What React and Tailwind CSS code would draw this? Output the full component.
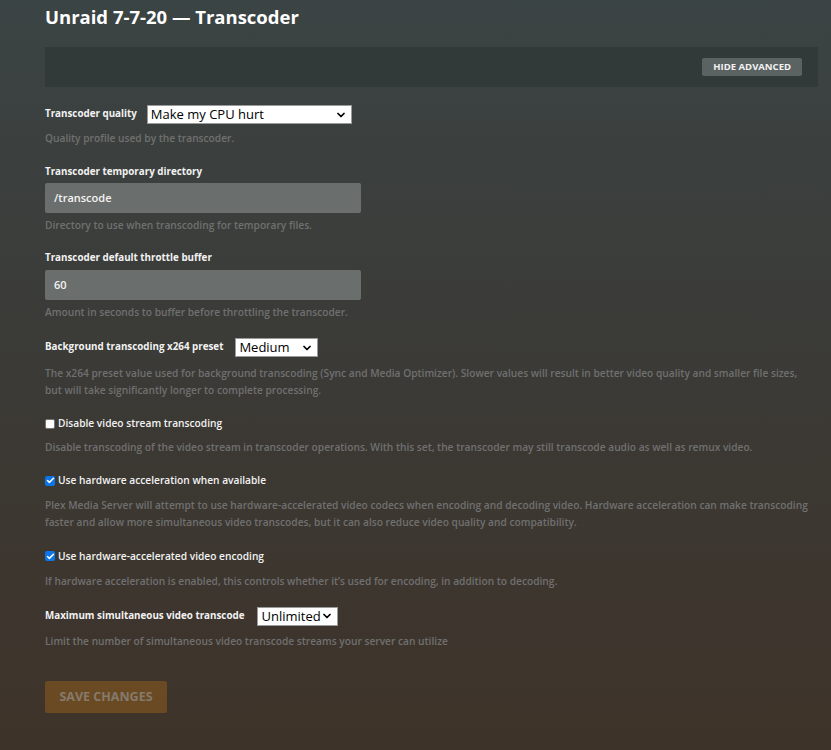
import { ChevronDown, Check } from "lucide-react";

const font = { fontFamily: "'Open Sans', 'Liberation Sans', sans-serif" };

// Native-looking select box with a chevron on the right
const Select = ({ value, className }) => (
  <div
    className={`flex h-[19px] items-center justify-between border border-[#9a9a9a] bg-white pl-[3px] pr-[4px] text-[13px] leading-none text-black ${className}`}
  >
    <span>{value}</span>
    <ChevronDown size={12} strokeWidth={3.5} className="text-black" />
  </div>
);

const Hint = ({ children, className = "" }) => (
  <p className={`text-[10.2px] font-semibold leading-[17px] text-[#707070] ${className}`}>
    {children}
  </p>
);

const Label = ({ children }) => (
  <span className="text-[9.8px] font-bold text-[#f2f2f2]">{children}</span>
);

const Checkbox = ({ checked, label }) => (
  <label className="flex items-center gap-[3px] text-[10.2px] font-semibold text-[#f2f2f2]">
    {checked ? (
      <span className="flex h-[10px] w-[10px] items-center justify-center rounded-[2px] bg-[#0b75ea]">
        <Check size={9} strokeWidth={4} className="text-white" />
      </span>
    ) : (
      <span className="h-[10px] w-[10px] rounded-[2px] border border-[#767676] bg-white" />
    )}
    {label}
  </label>
);

const TextInput = ({ value }) => (
  <div className="flex h-[30px] w-[316px] items-center rounded-[2px] bg-[#6a6e6d] px-[9px] text-[11px] font-semibold text-[#f4f4f4]">
    {value}
  </div>
);

export default function App() {
  return (
    <div
      style={font}
      className="min-h-screen bg-linear-to-b from-[#3b4444] via-[#3b3a36] to-[#3e3329] pb-[37px] pl-[45px] pr-[13px]"
    >
      {/* Page title */}
      <h1 className="pt-[3px] text-[18.5px] font-bold leading-[28px] text-white">
        Unraid 7-7-20 — Transcoder
      </h1>

      {/* Toolbar */}
      <div className="mt-[16px] flex h-[40px] items-center justify-end bg-[#323a39] pr-[16px]">
        <button className="h-[18px] rounded-[2px] bg-[#5b6262] px-[11px] text-[9.5px] font-bold uppercase leading-none text-[#f2f2f2]">
          Hide Advanced
        </button>
      </div>

      {/* Transcoder quality */}
      <div className="mt-[18px] flex items-center gap-[10px]">
        <Label>Transcoder quality</Label>
        <Select value="Make my CPU hurt" className="w-[205px]" />
      </div>
      <Hint className="mt-[6px]">Quality profile used by the transcoder.</Hint>

      {/* Temporary directory */}
      <div className="mt-[10px]">
        <Label>Transcoder temporary directory</Label>
      </div>
      <div className="mt-[2px]">
        <TextInput value="/transcode" />
      </div>
      <Hint className="mt-[4px]">Directory to use when transcoding for temporary files.</Hint>

      {/* Throttle buffer */}
      <div className="mt-[9px]">
        <Label>Transcoder default throttle buffer</Label>
      </div>
      <div className="mt-[3px]">
        <TextInput value="60" />
      </div>
      <Hint className="mt-[4px]">Amount in seconds to buffer before throttling the transcoder.</Hint>

      {/* x264 preset */}
      <div className="mt-[17px] flex items-center gap-[12px]">
        <Label>Background transcoding x264 preset</Label>
        <Select value="Medium" className="w-[83px]" />
      </div>
      <Hint className="mt-[8px] pr-[20px]">
        The x264 preset value used for background transcoding (Sync and Media Optimizer). Slower
        values will result in better video quality and smaller file sizes, but will take
        significantly longer to complete processing.
      </Hint>

      <div className="mt-[17px]">
        <Checkbox label="Disable video stream transcoding" />
      </div>
      <Hint className="mt-[8px]">
        Disable transcoding of the video stream in transcoder operations. With this set, the
        transcoder may still transcode audio as well as remux video.
      </Hint>

      <div className="mt-[17px]">
        <Checkbox checked label="Use hardware acceleration when available" />
      </div>
      <Hint className="mt-[8px] pr-[6px]">
        Plex Media Server will attempt to use hardware-accelerated video codecs when encoding and
        decoding video. Hardware acceleration can make transcoding faster and allow more
        simultaneous video transcodes, but it can also reduce video quality and compatibility.
      </Hint>

      <div className="mt-[18px]">
        <Checkbox checked label="Use hardware-accelerated video encoding" />
      </div>
      <Hint className="mt-[9px]">
        If hardware acceleration is enabled, this controls whether it’s used for encoding, in
        addition to decoding.
      </Hint>

      {/* Simultaneous transcodes */}
      <div className="mt-[17px] flex items-center gap-[13px]">
        <Label>Maximum simultaneous video transcode</Label>
        <Select value="Unlimited" className="w-[81px]" />
      </div>
      <Hint className="mt-[7px]">
        Limit the number of simultaneous video transcode streams your server can utilize
      </Hint>

      <button
        disabled
        className="mt-[31px] h-[32px] w-[122px] rounded-[2px] bg-[#6a4a22] text-[12.5px] font-bold uppercase text-[#857a6c]"
      >
        Save Changes
      </button>
    </div>
  );
}
